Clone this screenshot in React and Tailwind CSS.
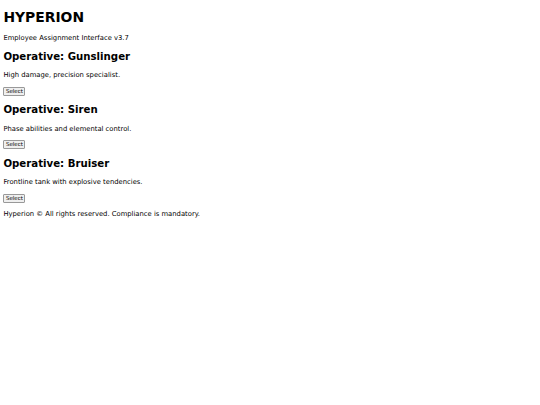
export default function App() {
  const operatives = [
    { name: 'Gunslinger', blurb: 'High damage, precision specialist.' },
    { name: 'Siren', blurb: 'Phase abilities and elemental control.' },
    { name: 'Bruiser', blurb: 'Frontline tank with explosive tendencies.' },
  ]

  return (
    <div className="min-h-[405px] bg-white text-black font-['DejaVu_Sans',sans-serif] pl-[3.4px] pt-[9.2px] flex flex-col items-start">
      <h1 className="text-[13.9px] leading-[16px] font-bold">HYPERION</h1>
      <p className="mt-[9.2px] text-[6.8px] leading-[8px]">Employee Assignment Interface v3.7</p>

      {operatives.map((op) => (
        <div key={op.name} className="flex flex-col items-start">
          <h2 className="mt-[8.56px] text-[10.2px] leading-[12px] font-bold">Operative: {op.name}</h2>
          <p className="mt-[8.56px] text-[6.8px] leading-[8px]">{op.blurb}</p>
          <button className="mt-[7.4px] h-[9px] w-[22px] px-0 text-[5.5px] leading-[7px] bg-[#efefef] border border-[#999] rounded-[1px]">
            Select
          </button>
        </div>
      ))}

      <p className="mt-[7.4px] text-[6.8px] leading-[8px]">
        Hyperion © All rights reserved. Compliance is mandatory.
      </p>
    </div>
  )
}
